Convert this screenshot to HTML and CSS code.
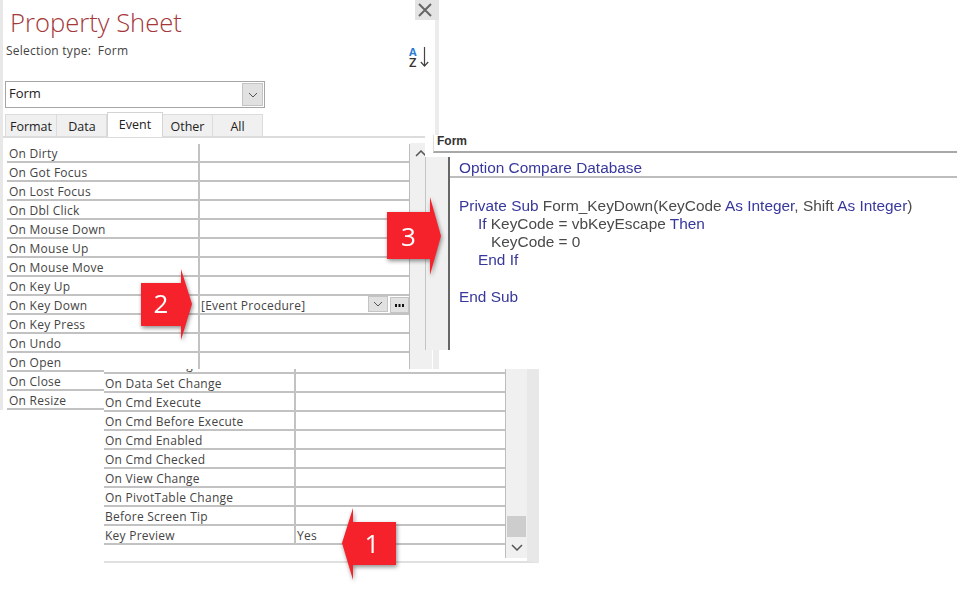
FILE: index.html
```html
<!DOCTYPE html>
<html lang="en">
<head>
<meta charset="utf-8">
<title>Property Sheet</title>
<link rel="stylesheet" href="styles.css">
</head>
<body>
<section class="sheet">
  <button class="close" type="button">
    <svg width="14" height="14" viewBox="0 0 14 14"><path d="M1 1l12 12M13 1l-12 12" stroke="#666" stroke-width="2" fill="none"/></svg>
  </button>
  <h1 class="title">Property Sheet</h1>
  <div class="subrow">
    <p class="selection">Selection type:&nbsp; Form</p>
    <div class="sort"><span class="sort-a">A</span><span class="sort-z">Z</span>
      <svg class="sort-arrow" width="9" height="20" viewBox="0 0 9 20"><path d="M4.500 0v19M.8 15l3.700 4 3.700-4" stroke="#444" stroke-width="1.200" fill="none"/></svg>
    </div>
  </div>
  <div class="combo">
    <span class="combo-text">Form</span>
    <span class="drop combo-drop"><svg width="10" height="6" viewBox="0 0 10 6"><path d="M1 1l4 4 4-4" stroke="#555" fill="none"/></svg></span>
  </div>
  <div class="tabs">
    <span class="tab tab-format">Format</span>
    <span class="tab tab-data">Data</span>
    <span class="tab tab-event">Event</span>
    <span class="tab tab-other">Other</span>
    <span class="tab tab-all">All</span>
  </div>
  <div class="rule"></div>
  <div class="grid-wrap">
    <div class="grid">
      <div class="row"><span class="label">On Dirty</span><span class="value"></span></div>
      <div class="row"><span class="label">On Got Focus</span><span class="value"></span></div>
      <div class="row"><span class="label">On Lost Focus</span><span class="value"></span></div>
      <div class="row"><span class="label">On Dbl Click</span><span class="value"></span></div>
      <div class="row"><span class="label">On Mouse Down</span><span class="value"></span></div>
      <div class="row"><span class="label">On Mouse Up</span><span class="value"></span></div>
      <div class="row"><span class="label">On Mouse Move</span><span class="value"></span></div>
      <div class="row"><span class="label">On Key Up</span><span class="value"></span></div>
      <div class="row"><span class="label">On Key Down</span><span class="value value-active">[Event Procedure]
        <span class="drop cell-drop"><svg width="10" height="6" viewBox="0 0 10 6"><path d="M1 1l4 4 4-4" stroke="#555" fill="none"/></svg></span>
        <span class="drop cell-build"><svg width="9" height="3" viewBox="0 0 9 3"><path d="M0 0h2v3H0zM3.500 0h2v3h-2zM7 0h2v3H7z" fill="#111"/></svg></span></span></div>
      <div class="row"><span class="label">On Key Press</span><span class="value"></span></div>
      <div class="row"><span class="label">On Undo</span><span class="value"></span></div>
      <div class="row"><span class="label">On Open</span><span class="value"></span></div>
      <div class="row"><span class="label">On Close</span><span class="value"></span></div>
      <div class="row"><span class="label">On Resize</span><span class="value"></span></div>
    </div>
    <div class="scroll scroll-top">
      <svg width="12" height="7" viewBox="0 0 12 7"><path d="M1 6l5-5 5 5" stroke="#555" stroke-width="1.500" fill="none"/></svg>
    </div>
    <div class="strip"></div>
  </div>
</section>

<section class="code">
  <div class="code-head"><span class="code-object">Form</span></div>
  <div class="code-body">
    <div class="code-margin"></div>
    <div class="code-pane">
      <div class="code-decl kw">Option Compare Database</div>
      <div class="code-text">
        <div class="line"><span class="kw">Private Sub</span> Form_KeyDown(KeyCode <span class="kw">As Integer</span>, Shift <span class="kw">As Integer</span>)</div>
        <div class="line indent-1"><span class="kw">If</span> KeyCode = vbKeyEscape <span class="kw">Then</span></div>
        <div class="line indent-2">KeyCode = 0</div>
        <div class="line indent-1"><span class="kw">End If</span></div>
        <div class="line line-blank"></div>
        <div class="line"><span class="kw">End Sub</span></div>
      </div>
    </div>
  </div>
</section>

<section class="lower">
  <div class="lower-main">
    <div class="grid grid-lower">
      <div class="row row-clipped"><span class="label">On Data Change</span><span class="value"></span></div>
      <div class="row"><span class="label">On Data Set Change</span><span class="value"></span></div>
      <div class="row"><span class="label">On Cmd Execute</span><span class="value"></span></div>
      <div class="row"><span class="label">On Cmd Before Execute</span><span class="value"></span></div>
      <div class="row"><span class="label">On Cmd Enabled</span><span class="value"></span></div>
      <div class="row"><span class="label">On Cmd Checked</span><span class="value"></span></div>
      <div class="row"><span class="label">On View Change</span><span class="value"></span></div>
      <div class="row"><span class="label">On PivotTable Change</span><span class="value"></span></div>
      <div class="row"><span class="label">Before Screen Tip</span><span class="value"></span></div>
      <div class="row"><span class="label">Key Preview</span><span class="value">Yes</span></div>
    </div>
    <div class="scroll scroll-lower">
      <span class="thumb"></span>
      <svg width="12" height="7" viewBox="0 0 12 7"><path d="M1 1l5 5 5-5" stroke="#555" stroke-width="1.500" fill="none"/></svg>
    </div>
  </div>
</section>

<div class="callout callout-1">
  <svg width="58" height="76" viewBox="0 0 58 76"><polygon points="0,35 11,0 11,14 54,14 54,57 11,57 11,72"/></svg>
  <span class="callout-num">1</span>
</div>
<div class="callout callout-2">
  <svg width="54" height="76" viewBox="0 0 54 76"><polygon points="0,14 40,14 40,0 51,35 40,71 40,57 0,57"/></svg>
  <span class="callout-num">2</span>
</div>
<div class="callout callout-3">
  <svg width="58" height="82" viewBox="0 0 58 82"><polygon points="0,15 43,15 43,0 54,39 43,78 43,62 0,62"/></svg>
  <span class="callout-num">3</span>
</div>
</body>
</html>
```

FILE: styles.css
```css
* { box-sizing: border-box; }
html, body { margin: 0; padding: 0; }
body {
  position: relative;
  width: 957px;
  height: 591px;
  overflow: hidden;
  background: #fff;
  font-family: "Open Sans", "Noto Sans", sans-serif;
  font-size: 12px;
  color: #333;
}

/* Property sheet window */
.sheet {
  position: absolute;
  left: 0;
  top: 0;
  width: 439px;
  height: 410px;
  padding-left: 3px;
  border-left: 3px solid #e8e8e8;
  border-right: 4px solid #ececec;
  background: #fff;
  display: flex;
  flex-direction: column;
}
.sheet > * { flex-shrink: 0; }
.close {
  position: absolute;
  right: -4px;
  top: 0;
  width: 24px;
  height: 20px;
  padding: 0 4px 0 0;
  border: 0;
  background: #e4e4e4;
  display: flex;
  align-items: center;
  justify-content: center;
}
.title {
  margin: 4px 0 0 4px;
  height: 37px;
  font-family: "Open Sans", sans-serif;
  font-size: 25.600px;
  line-height: 38px;
  font-weight: 300;
  color: #a4373a;
}
.subrow {
  display: flex;
  justify-content: space-between;
  height: 40px;
  padding-right: 3px;
}
.selection {
  margin: 1px 0 0;
  line-height: 18px;
  font-size: 12px;
  letter-spacing: 0.25px;
  color: #444;
}
.sort {
  position: relative;
  width: 24px;
  height: 24px;
  margin-top: 5px;
  font-weight: 700;
  font-size: 11px;
  line-height: 11px;
}
.sort-a { position: absolute; left: 1px; top: 0; color: #2b7cd3; }
.sort-z { position: absolute; left: 1px; top: 11px; font-size: 13px; font-weight: 600; color: #333; }
.sort-arrow { position: absolute; right: 3px; top: 1px; }

.combo {
  display: flex;
  align-items: center;
  justify-content: space-between;
  width: 260px;
  height: 27px;
  margin-left: -1px;
  padding: 0 1px 0 3px;
  border: 1px solid #a6a6a6;
  font-size: 13px;
  color: #222;
}
.combo-text { margin-top: -4px; }
.drop {
  display: flex;
  align-items: center;
  justify-content: center;
  background: #e1e1e1;
  border: 1px solid #c4c4c4;
}
.combo-drop { width: 21px; height: 23px; }

.tabs {
  display: flex;
  align-items: flex-end;
  height: 28px;
  margin-left: -1px;
  position: relative;
  z-index: 1;
  font-size: 12.500px;
}
.tab {
  height: 22px;
  line-height: 24px;
  text-align: center;
  background: #f0f0f0;
  border: 1px solid #dcdcdc;
  border-bottom: 0;
  color: #222;
}
.tab-format { width: 52px; }
.tab-data { width: 50px; border-left: 0; padding-left: 1px; }
.tab-event { width: 56px; height: 25px; line-height: 23px; background: #fff; margin-bottom: -1px; border-color: #d4d4d4; }
.tab-other { width: 50px; border-left: 0; }
.tab-all { width: 50px; border-left: 0; }

.rule {
  width: 422px;
  height: 2px;
  margin-left: -3px;
  background: #dcdcdc;
}
.grid-wrap {
  display: flex;
  align-items: stretch;
  flex: 1;
  width: 432px;
  margin-left: -3px;
  padding-left: 4px;
}
.grid {
  width: 403px;
  flex: none;
  margin-top: 6px;
  border-right: 1px solid #bdbdbd;
  font-size: 12px;
  letter-spacing: 0.25px;
  color: #444;
}
.row {
  display: flex;
  height: 19px;
  border-bottom: 2px solid #c2c2c2;
}
.label {
  width: 193px;
  flex: none;
  padding-left: 2px;
  line-height: 20px;
  white-space: nowrap;
  border-right: 2px solid #c2c2c2;
}
.value {
  flex: 1;
  padding-left: 1px;
  line-height: 20px;
}
.value-active {
  display: flex;
  align-items: flex-start;
}
.cell-drop { width: 20px; height: 16px; margin-left: auto; }
.cell-build { width: 19px; height: 16px; margin-left: 2px; margin-top: 1px; }

.scroll {
  background: #f0f0f0;
  display: flex;
  flex-direction: column;
  align-items: center;
}
.scroll-top {
  width: 22px;
  flex: none;
  margin-top: 5px;
  padding: 7px 1px 0 0;
}
.strip {
  width: 2px;
  flex: none;
  margin-left: 1px;
  background: #ececec;
}

/* Code window */
.code {
  position: absolute;
  left: 425px;
  top: 135px;
  width: 532px;
  height: 215px;
  background: #fff;
  display: flex;
  flex-direction: column;
}
.code-head {
  flex: none;
  height: 18px;
  margin-left: 8px;
  padding-left: 3px;
  border-bottom: 2px solid #a8a8a8;
  border-left: 1px solid #ddd;
}
.code-object {
  display: block;
  font-family: "Liberation Sans", Arial, sans-serif;
  font-size: 12px;
  font-weight: 700;
  line-height: 13px;
  color: #333;
}
.code-body { flex: 1; display: flex; }
.code-margin {
  flex: none;
  width: 25px;
  margin-top: 4px;
  background: #f0f0f0;
  border-left: 1px solid #c4c4c4;
  border-right: 2px solid #666;
}
.code-pane {
  flex: 1;
  font-family: "Liberation Sans", Arial, sans-serif;
  font-size: 15.400px;
  color: #4a4a4a;
  filter: blur(0.3px);
}
.code-decl {
  height: 25px;
  padding: 6px 0 0 9px;
  line-height: 18px;
  border-bottom: 2px solid #bdbdbd;
}
.code-text {
  margin: 18.500px 0 0 9px;
  line-height: 18.300px;
}
.line { height: 18.300px; white-space: nowrap; }
.indent-1 { padding-left: 19px; }
.indent-2 { padding-left: 32px; }
.kw { color: #38389c; }

/* Lower property window */
.lower {
  position: absolute;
  left: 104px;
  top: 369px;
  width: 435px;
  height: 194px;
  background: #fff;
  border-right: 12px solid #e8e8e8;
  border-bottom: 2px solid #e0e0e0;
  overflow: hidden;
}
.lower-main { display: flex; }
.grid-lower { flex: none; width: 402px; margin-top: 0; }
.grid-lower .label { width: 192px; padding-left: 1px; }
.row-clipped { margin-top: -14px; }
.scroll-lower {
  width: 21px;
  height: 189px;
  padding-top: 147px;
  gap: 7px;
}
.thumb { width: 19px; height: 21px; background: #cdcdcd; flex: none; }

/* Numbered arrows */
.callout {
  position: absolute;
  filter: drop-shadow(1px 2px 2px rgba(0, 0, 0, 0.45));
}
.callout svg { display: block; }
.callout polygon { fill: #f6222b; }
.callout-num {
  position: absolute;
  color: #fff;
  font-size: 26px;
  line-height: 30px;
  text-align: center;
}
.callout-1 { left: 342px; top: 508px; }
.callout-1 .callout-num { left: 11px; top: 20px; width: 38px; }
.callout-2 { left: 141px; top: 269px; }
.callout-2 .callout-num { left: 0; top: 19px; width: 40px; }
.callout-3 { left: 387px; top: 197px; }
.callout-3 .callout-num { left: 0; top: 24px; width: 43px; }
```
